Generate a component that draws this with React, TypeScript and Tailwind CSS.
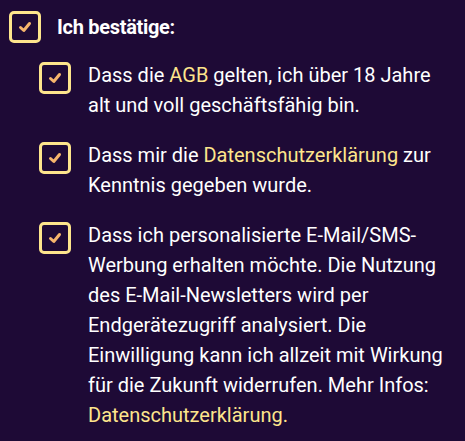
import React from 'react';

function CheckBox() {
  return (
    <div className="flex h-8 w-8 shrink-0 items-center justify-center rounded-[5px] border-[3px] border-[#fde58c]">
      <svg viewBox="0 0 16 16" className="h-4 w-4" fill="none">
        <path d="M3.5 8.5 L6.8 11.5 L12.5 4.5" stroke="#f6b56c" strokeWidth="3" strokeLinecap="round" strokeLinejoin="round" />
      </svg>
    </div>
  );
}

const Link = ({ children }: { children: React.ReactNode }) => (
  <span className="text-[#fde58c]">{children}</span>
);

export default function App() {
  return (
    <div
      className="min-h-[441px] w-[465px] bg-[#1e0a36] pl-[9px] pt-[11px] text-white"
      style={{ fontFamily: 'Roboto, "Noto Sans", sans-serif' }}
    >
      <div className="flex items-center gap-4">
        <CheckBox />
        <span className="text-[20px] font-bold tracking-[-0.3px]">Ich bestätige:</span>
      </div>

      <div className="ml-[30px] mt-[17px] flex flex-col gap-5">
        <div className="flex items-start gap-[17px]">
          <div className="mt-[2px]">
            <CheckBox />
          </div>
          <p className="w-[362px] text-[20px] leading-[30px]">
            Dass die <Link>AGB</Link> gelten, ich über 18 Jahre alt und voll geschäftsfähig bin.
          </p>
        </div>

        <div className="flex items-start gap-[17px]">
          <div className="mt-[2px]">
            <CheckBox />
          </div>
          <p className="w-[362px] text-[20px] leading-[30px]">
            Dass mir die <Link>Datenschutzerklärung</Link> zur Kenntnis gegeben wurde.
          </p>
        </div>

        <div className="flex items-start gap-[17px]">
          <div className="mt-[2px]">
            <CheckBox />
          </div>
          <p className="w-[362px] text-[20px] leading-[30px]">
            Dass ich personalisierte E-Mail/SMS-Werbung erhalten möchte. Die Nutzung des E-Mail-Newsletters wird
            per Endgerätezugriff analysiert. Die Einwilligung kann ich allzeit mit Wirkung für die Zukunft
            widerrufen. Mehr Infos: <Link>Datenschutzerklärung.</Link>
          </p>
        </div>
      </div>
    </div>
  );
}
